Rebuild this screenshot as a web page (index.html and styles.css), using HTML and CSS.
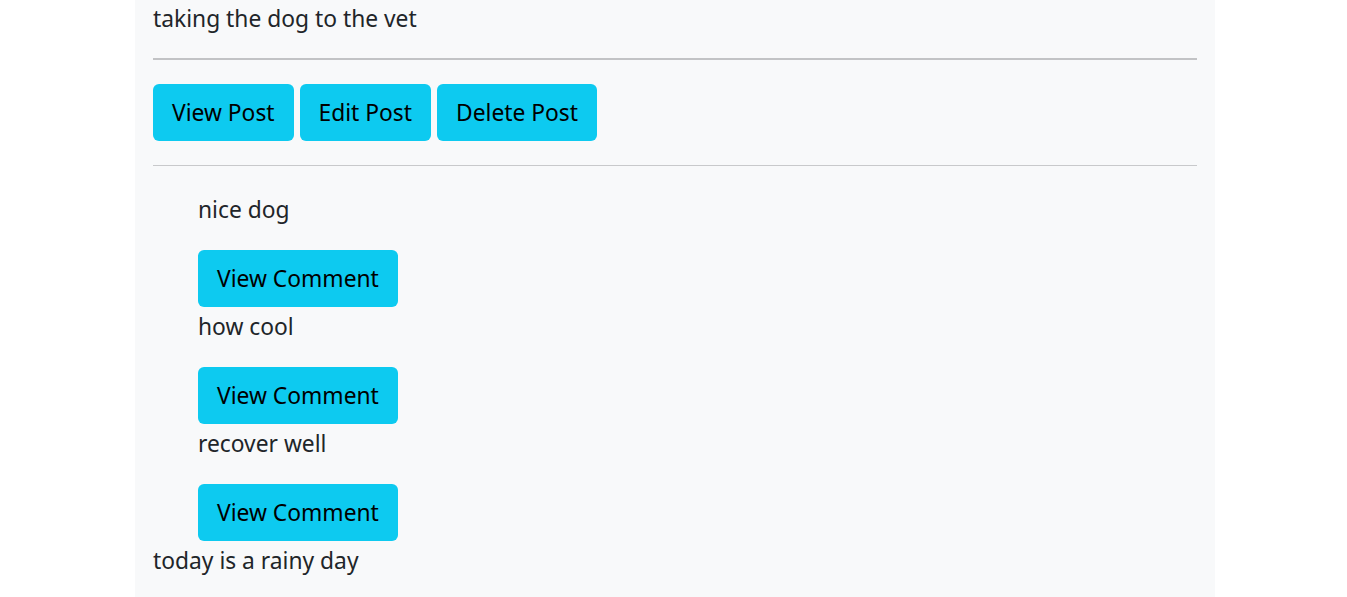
FILE: index.html
```html
<!DOCTYPE html>
<html>
<head>
<meta charset="utf-8">
<link rel="stylesheet" href="styles.css">
</head>
<body>
<div class="page">
  <div class="post">
    <p class="post-text">taking the dog to the vet</p>
    <hr class="rule rule-top">
    <div class="actions">
      <button class="btn">View Post</button>
      <button class="btn">Edit Post</button>
      <button class="btn">Delete Post</button>
    </div>
    <hr class="rule rule-bottom">
    <div class="comments">
      <div class="comment">
        <p class="comment-text">nice dog</p>
        <button class="btn">View Comment</button>
      </div>
      <div class="comment">
        <p class="comment-text">how cool</p>
        <button class="btn">View Comment</button>
      </div>
      <div class="comment">
        <p class="comment-text">recover well</p>
        <button class="btn">View Comment</button>
      </div>
    </div>
  </div>
  <div class="post">
    <p class="post-text">today is a rainy day</p>
  </div>
</div>
</body>
</html>
```

FILE: styles.css
```css
html, body {
  margin: 0;
  padding: 0;
  background: #ffffff;
}
body {
  padding-left: 3px;
  font-family: "Noto Sans", "Open Sans", sans-serif;
  font-size: 22.8px;
  color: #212529;
}
.page {
  width: 1080px;
  margin: 0 auto;
  background: #f8f9fa;
  padding: 2px 18px 30px;
  box-sizing: border-box;
  min-height: 597px;
}
.post {
  display: flex;
  flex-direction: column;
}
p {
  margin: 0;
  line-height: 33px;
}
.rule {
  border: 0;
  margin: 0;
  width: 100%;
}
.rule-top {
  margin-top: 23px;
  border-top: 2px solid #c2c3c5;
}
.rule-bottom {
  margin-top: 24px;
  border-top: 1px solid #c8c9cb;
}
.actions {
  display: flex;
  gap: 6px;
  margin-top: 24px;
}
.btn {
  font-family: inherit;
  font-size: 22.8px;
  color: #000;
  background: #0dcaf0;
  border: 0;
  border-radius: 6px;
  height: 57px;
  padding: 0 19px;
  line-height: 57px;
}
.comments {
  display: flex;
  flex-direction: column;
  padding-left: 45px;
  margin-top: 27px;
  align-items: flex-start;
}
.comment {
  display: flex;
  flex-direction: column;
  align-items: flex-start;
}
.comment-text {
  margin-bottom: 24px;
}
.comment .btn {
  margin-bottom: 3px;
}
```
